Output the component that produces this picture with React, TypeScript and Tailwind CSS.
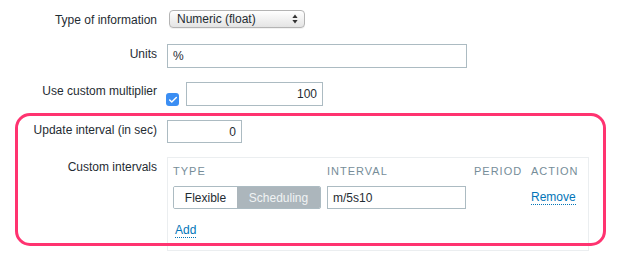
import { Check } from "lucide-react";

const font = { fontFamily: '"Liberation Sans", Arial, sans-serif' };

function Label({ text, pad = "pt-[3px]" }: { text: string; pad?: string }) {
  return (
    <div className={`w-[157px] shrink-0 text-right text-[12px] leading-[14px] text-[#1f2c33] ${pad}`}>
      {text}
    </div>
  );
}

export default function App() {
  return (
    <div className="relative w-[640px] h-[256px] bg-white overflow-hidden" style={font}>
      <div className="pt-[10px] flex flex-col">
        {/* Type of information */}
        <div className="flex">
          <Label text="Type of information" />
          <div className="ml-[12px] w-[136px] h-[18px] rounded-[4px] border border-[#b4b4b4] bg-gradient-to-b from-[#ffffff] to-[#e4e4e4] flex items-center justify-between pl-[7px] pr-[6px] shadow-[0_1px_0_rgba(0,0,0,0.05)]">
            <span className="text-[12px] text-[#1f2c33] leading-none">Numeric (float)</span>
            <svg width="6" height="10" viewBox="0 0 6 10">
              <path d="M3 0.5 L5.6 4 H0.4 Z" fill="#333" />
              <path d="M3 9.5 L5.6 6 H0.4 Z" fill="#333" />
            </svg>
          </div>
        </div>

        {/* Units */}
        <div className="flex mt-[16px]">
          <Label text="Units" />
          <div className="ml-[10px] w-[300px] h-[24px] border border-[#acbbc2] flex items-center px-[5px] text-[12px] text-[#1f2c33]">
            %
          </div>
        </div>

        {/* Use custom multiplier */}
        <div className="flex mt-[14px]">
          <Label text="Use custom multiplier" pad="pt-[2px]" />
          <div className="ml-[9px] flex items-start">
            <div className="mt-[11px] w-[13px] h-[13px] rounded-[3px] bg-[#3b8ef3] flex items-center justify-center">
              <Check size={10} strokeWidth={3.5} color="#ffffff" />
            </div>
            <div className="ml-[7px] w-[137px] h-[24px] border border-[#acbbc2] flex items-center justify-end px-[5px] text-[12px] text-[#1f2c33]">
              100
            </div>
          </div>
        </div>

        {/* Update interval */}
        <div className="flex mt-[14px]">
          <Label text="Update interval (in sec)" />
          <div className="ml-[10px] w-[75px] h-[23px] border border-[#acbbc2] flex items-center justify-end px-[5px] text-[12px] text-[#1f2c33]">
            0
          </div>
        </div>

        {/* Custom intervals */}
        <div className="flex mt-[14px]">
          <Label text="Custom intervals" />
          <div className="ml-[10px] w-[422px] h-[94px] border border-[#ebeef0] pl-[5px] pt-[6px]">
            <div className="flex text-[11px] leading-[14px] tracking-[1px] text-[#768d99]">
              <div className="w-[154px]">TYPE</div>
              <div className="w-[147px]">INTERVAL</div>
              <div className="w-[57px]">PERIOD</div>
              <div>ACTION</div>
            </div>
            <div className="flex items-center mt-[8px]">
              <div className="flex h-[23px] w-[148px] rounded-[2px] border border-[#acbbc2] overflow-hidden text-[12px]">
                <div className="w-[63px] flex items-center justify-center bg-white text-[#1f2c33]">Flexible</div>
                <div className="flex-1 flex items-center justify-center bg-[#acb6bc] text-[#f0f3f4]">Scheduling</div>
              </div>
              <div className="ml-[6px] w-[139px] h-[23px] border border-[#acbbc2] flex items-center px-[5px] text-[12px] text-[#1f2c33]">
                m/5s10
              </div>
              <div className="ml-[65px] text-[12px] leading-[14px] text-[#0275b8] border-b border-dotted border-[#0275b8]">
                Remove
              </div>
            </div>
            <div className="mt-[14px] ml-[2px] inline-block text-[12px] leading-[14px] text-[#0275b8] border-b border-dotted border-[#0275b8]">
              Add
            </div>
          </div>
        </div>
      </div>

      {/* Highlight annotation */}
      <div className="absolute left-[15px] top-[113px] w-[591px] h-[133px] border-[3px] border-[#ff3370] rounded-[15px] pointer-events-none" />
    </div>
  );
}
